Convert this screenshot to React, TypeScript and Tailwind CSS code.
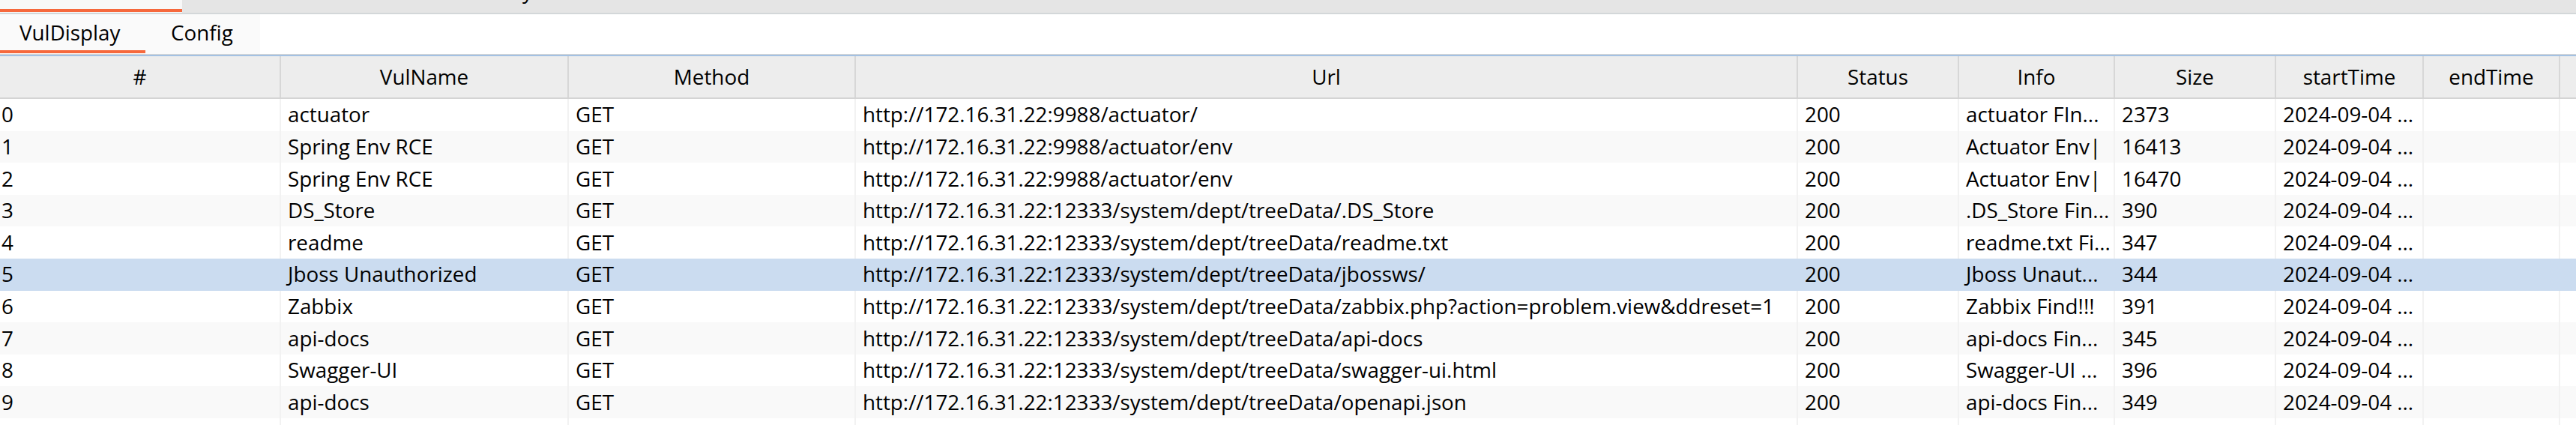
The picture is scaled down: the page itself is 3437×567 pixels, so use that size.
import React from "react";

const COLS =
  "grid grid-cols-[375px_384px_383px_1257px_215px_208px_215px_197px_182px_1fr]";

type Row = {
  id: string;
  name: string;
  method: string;
  url: string;
  status: string;
  info: string;
  size: string;
  start: string;
  end: string;
};

const B = "http://172.16.31.22:12333/system/dept/treeData/";

const rows: Row[] = [
  { id: "0", name: "actuator", method: "GET", url: "http://172.16.31.22:9988/actuator/", status: "200", info: "actuator FIn...", size: "2373", start: "2024-09-04 ...", end: "" },
  { id: "1", name: "Spring Env RCE", method: "GET", url: "http://172.16.31.22:9988/actuator/env", status: "200", info: "Actuator Env|", size: "16413", start: "2024-09-04 ...", end: "" },
  { id: "2", name: "Spring Env RCE", method: "GET", url: "http://172.16.31.22:9988/actuator/env", status: "200", info: "Actuator Env|", size: "16470", start: "2024-09-04 ...", end: "" },
  { id: "3", name: "DS_Store", method: "GET", url: B + ".DS_Store", status: "200", info: ".DS_Store Fin...", size: "390", start: "2024-09-04 ...", end: "" },
  { id: "4", name: "readme", method: "GET", url: B + "readme.txt", status: "200", info: "readme.txt Fi...", size: "347", start: "2024-09-04 ...", end: "" },
  { id: "5", name: "Jboss Unauthorized", method: "GET", url: B + "jbossws/", status: "200", info: "Jboss Unaut...", size: "344", start: "2024-09-04 ...", end: "" },
  { id: "6", name: "Zabbix", method: "GET", url: B + "zabbix.php?action=problem.view&ddreset=1", status: "200", info: "Zabbix Find!!!", size: "391", start: "2024-09-04 ...", end: "" },
  { id: "7", name: "api-docs", method: "GET", url: B + "api-docs", status: "200", info: "api-docs Fin...", size: "345", start: "2024-09-04 ...", end: "" },
  { id: "8", name: "Swagger-UI", method: "GET", url: B + "swagger-ui.html", status: "200", info: "Swagger-UI ...", size: "396", start: "2024-09-04 ...", end: "" },
  { id: "9", name: "api-docs", method: "GET", url: B + "openapi.json", status: "200", info: "api-docs Fin...", size: "349", start: "2024-09-04 ...", end: "" },
  { id: "", name: "", method: "", url: "", status: "", info: "", size: "", start: "", end: "" },
];

const headers = ["#", "VulName", "Method", "Url", "Status", "Info", "Size", "startTime", "endTime", ""];

export default function App() {
  return (
    <div
      className="w-[3437px] h-[567px] overflow-hidden bg-white text-black text-[27.8px]"
      style={{ fontFamily: '"Open Sans", "Noto Sans", sans-serif' }}
    >
      {/* top strip */}
      <div className="flex h-[17px] bg-[#e5e5e5] overflow-hidden">
        <div className="w-[243px] h-[17px] bg-[#f8f8f8] flex flex-col">
          <div className="h-[12px]" />
          <div className="h-[4px] bg-[#f6683c]" />
        </div>
        <span className="ml-[454px] mt-[-26px] leading-none">y</span>
      </div>
      <div className="h-[2px] bg-[#d3d7d9]" />

      {/* second tab bar */}
      <div className="flex h-[53px] bg-white">
        <div className="flex w-[347px] bg-[#fafafa]">
          <div className="w-[194px] flex flex-col">
            <div className="h-[48px] pl-[26px] flex items-center leading-none pt-[1px]">VulDisplay</div>
            <div className="h-[4px] bg-[#f6683c]" />
          </div>
          <div className="flex-1 h-[48px] pl-[34px] flex items-center leading-none pt-[1px]">Config</div>
        </div>
      </div>
      <div className="h-[1px] bg-[#d6d6d6]" />
      <div className="h-[2px] bg-[#a3c1e3]" />

      {/* header */}
      <div className={`${COLS} h-[57px] bg-[#ededed] border-b-2 border-[#d4d4d4]`}>
        {headers.map((h, i) => (
          <div
            key={i}
            className={`flex items-center justify-center leading-none whitespace-nowrap ${
              i < 9 ? "border-r-2 border-[#d7d7d7]" : ""
            }`}
          >
            {h}
          </div>
        ))}
      </div>

      {/* body */}
      {rows.map((r, i) => {
        const bg = i === 5 ? "bg-[#cbdcf0]" : i % 2 === 1 ? "bg-[#f9f9f9]" : "bg-white";
        const cells = [r.id, r.name, r.method, r.url, r.status, r.info, r.size, r.start, r.end, ""];
        return (
          <div key={i} className={`${COLS} h-[42.6px] ${bg}`}>
            {cells.map((c, j) => (
              <div
                key={j}
                className={`flex items-center leading-none whitespace-nowrap overflow-hidden ${
                  j === 0 ? "pl-[2px]" : "pl-[9px]"
                } ${j < 9 && i !== 5 ? "border-r-2 border-[#f2f2f2]" : ""} ${j < 9 && i === 5 ? "border-r-2 border-transparent" : ""}`}
              >
                {c}
              </div>
            ))}
          </div>
        );
      })}
    </div>
  );
}
